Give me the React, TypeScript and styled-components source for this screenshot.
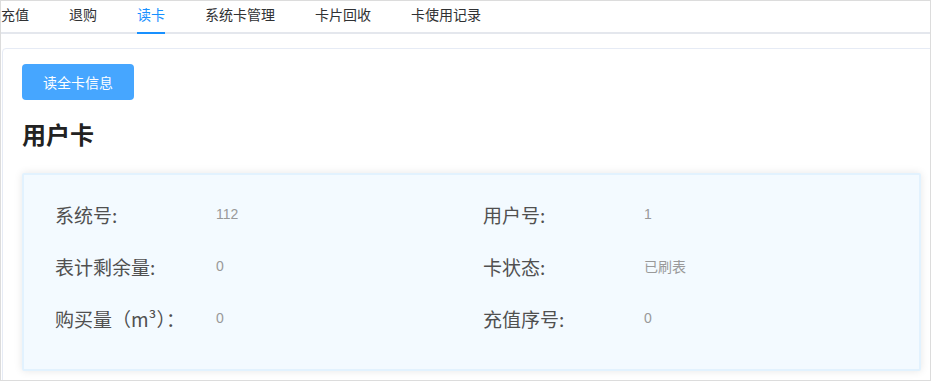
import styled, { createGlobalStyle } from "styled-components";
import { FC } from "react";

const GlobalStyle = createGlobalStyle`
  html, body {
    margin: 0;
    padding: 0;
    background: #fff;
  }
  body {
    font-family: "Noto Sans CJK SC", "Liberation Sans", sans-serif;
    color: #303133;
  }
`;

const Page = styled.div`
  box-sizing: border-box;
  width: 931px;
  height: 381px;
  border: 1px solid #dcdcdc;
  overflow: hidden;
`;

const TabBar = styled.div`
  display: flex;
  height: 31px;
  border-bottom: 2px solid #e4e7ed;
`;

const Tab = styled.div<{ $active?: boolean }>`
  position: relative;
  padding: 0 20px;
  font-size: 14px;
  line-height: 27px;
  color: ${(props) => (props.$active ? "#1890ff" : "#303133")};

  &:first-child {
    padding-left: 0;
  }

  ${(props) =>
    props.$active &&
    `
    &::after {
      content: "";
      position: absolute;
      left: 20px;
      right: 20px;
      bottom: -2px;
      height: 2px;
      background: #1890ff;
    }
  `}
`;

const Card = styled.div`
  margin: 14px -6px 0 1px;
  padding: 15px 14px 0 19px;
  border: 1px solid #e6ebf5;
  border-radius: 4px;
  height: 340px;
`;

const Button = styled.button`
  width: 112px;
  height: 36px;
  border: none;
  border-radius: 4px;
  background: #46a6ff;
  color: #fff;
  font-family: inherit;
  font-size: 14px;
  cursor: pointer;
`;

const Title = styled.h2`
  margin: 14px 0 0;
  font-size: 24px;
  line-height: 40px;
  font-weight: 700;
  color: #222;
`;

const InfoBox = styled.div`
  margin-top: 19px;
  height: 198px;
  box-sizing: border-box;
  padding: 13px 0 0 31px;
  background: #f3faff;
  border: 2px solid #e2f2fe;
  border-radius: 2px;
  box-shadow: 0 0 8px rgba(0, 0, 0, 0.1);
  display: grid;
  grid-template-columns: 428px 428px;
  grid-auto-rows: 52px;
`;

const Field = styled.div`
  display: flex;
  align-items: center;
`;

const Label = styled.span`
  width: 161px;
  font-size: 19px;
  color: #505050;
`;

const Value = styled.span`
  font-family: "Liberation Sans", "Noto Sans CJK SC", sans-serif;
  font-size: 14px;
  color: #999;
`;

const tabs = ["充值", "退购", "读卡", "系统卡管理", "卡片回收", "卡使用记录"];

const fields = [
  { label: "系统号:", value: "112" },
  { label: "用户号:", value: "1" },
  { label: "表计剩余量:", value: "0" },
  { label: "卡状态:", value: "已刷表" },
  { label: "购买量（m³）：", value: "0" },
  { label: "充值序号:", value: "0" },
];

const App: FC = () => {
  return (
    <>
      <GlobalStyle />
      <Page>
        <TabBar>
          {tabs.map((tab) => (
            <Tab key={tab} $active={tab === "读卡"}>
              {tab}
            </Tab>
          ))}
        </TabBar>
        <Card>
          <Button>读全卡信息</Button>
          <Title>用户卡</Title>
          <InfoBox>
            {fields.map((field) => (
              <Field key={field.label}>
                <Label>{field.label}</Label>
                <Value>{field.value}</Value>
              </Field>
            ))}
          </InfoBox>
        </Card>
      </Page>
    </>
  );
};

export default App;
